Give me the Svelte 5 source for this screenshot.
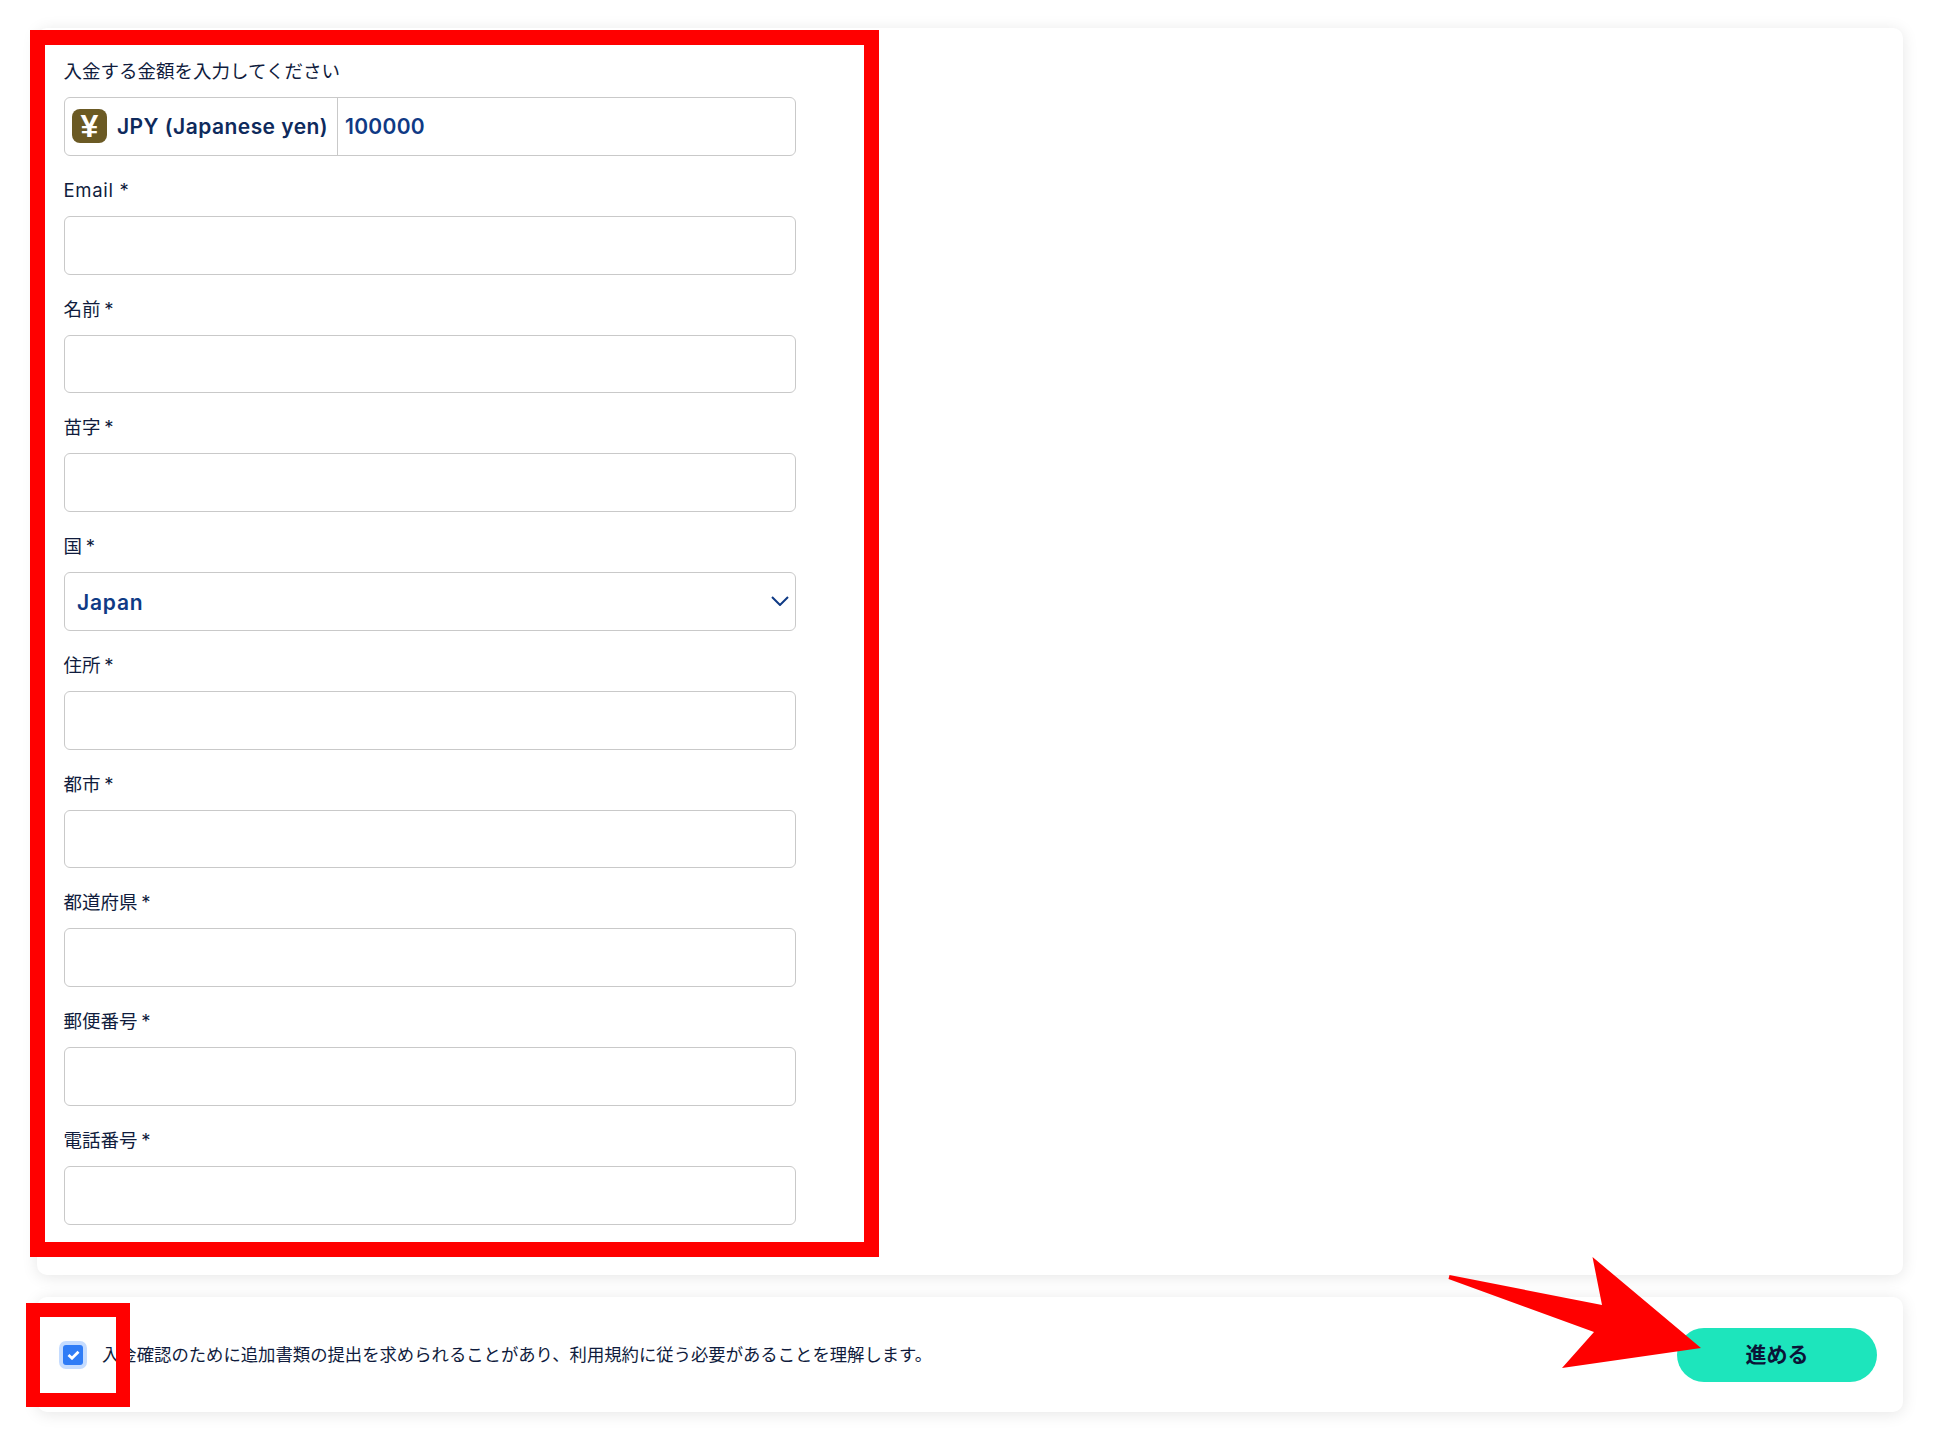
<script lang="ts">
	const fields = ['Email', '名前', '苗字', '国', '住所', '都市', '都道府県', '郵便番号', '電話番号'];
</script>

<div class="page">
	<section class="card form-card">
		<div class="field">
			<div class="label">入金する金額を入力してください</div>
			<div class="control amount">
				<div class="currency">
					<span class="coin">¥</span>
					<span class="code">JPY (Japanese yen)</span>
				</div>
				<span class="value">100000</span>
			</div>
		</div>

		{#each fields as name}
			<div class="field">
				<div class="label" class:latin={name === 'Email'}>{name} *</div>
				{#if name === '国'}
					<div class="control select">
						<span class="value">Japan</span>
						<svg class="chevron" width="18" height="10" viewBox="0 0 18 10" fill="none">
							<path d="M1 1l8 8 8-8" stroke="#0f3a85" stroke-width="2" />
						</svg>
					</div>
				{:else}
					<div class="control"></div>
				{/if}
			</div>
		{/each}
	</section>

	<section class="card confirm-card">
		<div class="confirm">
			<span class="checkbox">
				<svg width="13" height="10" viewBox="0 0 13 10" fill="none">
					<path d="M1.5 5l3.5 3.2 6.5-6.5" stroke="#fff" stroke-width="2.8" />
				</svg>
			</span>
			<span class="confirm-text">入金確認のために追加書類の提出を求められることがあり、利用規約に従う必要があることを理解します。</span>
		</div>
		<button class="next" type="button">進める</button>
	</section>

	<!-- screenshot annotations -->
	<div class="mark mark-form"></div>
	<div class="mark mark-check"></div>
	<svg class="arrow" width="1946" height="1438" viewBox="0 0 1946 1438">
		<polygon
			fill="#ff0000"
			points="1449.5,1275 1602,1305 1592.5,1257 1701,1348 1562,1368 1594,1332 1448.5,1279"
		/>
	</svg>
</div>

<style>
	:global(body) {
		margin: 0;
		background: #fff;
	}

	.page {
		position: relative;
		width: 1946px;
		height: 1438px;
		box-sizing: border-box;
		padding: 28px 43px 0 37px;
		overflow: hidden;
		font-family: Inter, 'Noto Sans CJK JP', sans-serif;
		color: #101c3d;
	}

	.card {
		background: #fff;
		border-radius: 10px;
		box-shadow: 0 2px 16px rgba(0, 0, 0, 0.1);
		box-sizing: border-box;
	}

	.form-card {
		height: 1247px;
		padding: 30px 0 0 26.5px;
	}

	.field {
		width: 732.5px;
		height: 118.75px;
	}

	.label {
		height: 26px;
		margin-bottom: 13px;
		font-size: 18.5px;
		line-height: 26px;
		word-spacing: -1.5px;
	}

	.label.latin {
		letter-spacing: 0.7px;
		word-spacing: 0;
	}

	.control {
		box-sizing: border-box;
		height: 58.75px;
		border: 1px solid #c9c9c9;
		border-radius: 6px;
		display: flex;
		align-items: center;
	}

	.amount {
		overflow: hidden;
	}

	.currency {
		display: flex;
		align-items: center;
		gap: 10px;
		box-sizing: border-box;
		height: 100%;
		width: 273.5px;
		padding-left: 7.5px;
		border-right: 1px solid #c9c9c9;
		flex: none;
	}

	.coin {
		display: flex;
		align-items: center;
		justify-content: center;
		width: 35px;
		height: 34px;
		border-radius: 8px;
		background: #6b5a24;
		color: #fff;
		font-family: 'Liberation Sans', sans-serif;
		font-size: 32px;
		font-weight: 700;
	}

	.code {
		font-size: 21px;
		font-weight: 600;
		letter-spacing: 0.45px;
		color: #0e2a5c;
		white-space: nowrap;
	}

	.value {
		padding-left: 7px;
		font-size: 21px;
		font-weight: 600;
		letter-spacing: 0.3px;
		color: #0f3a85;
	}

	.select {
		justify-content: space-between;
		padding-left: 5.5px;
		padding-right: 6px;
	}

	.select .value {
		padding-top: 2px;
		letter-spacing: 0.8px;
	}

	.confirm-card {
		display: flex;
		align-items: center;
		justify-content: space-between;
		height: 115px;
		margin-top: 22px;
		padding: 0 26px 0 26px;
	}

	.confirm {
		display: flex;
		align-items: center;
		gap: 19px;
	}

	.checkbox {
		display: flex;
		align-items: center;
		justify-content: center;
		box-sizing: border-box;
		width: 20px;
		height: 20px;
		border-radius: 3px;
		background: #2f7cf6;
		box-shadow: 0 0 0 4px #c5dcff;
	}

	.confirm-text {
		font-size: 17.35px;
		line-height: 26px;
	}

	.next {
		width: 200px;
		height: 54px;
		padding-bottom: 4px;
		border: none;
		border-radius: 27px;
		background: #1de5bc;
		color: #0b1437;
		font-family: inherit;
		font-size: 21px;
		font-weight: 700;
	}

	.mark {
		position: absolute;
		box-sizing: border-box;
		border: 15px solid #ff0000;
	}

	.mark-form {
		left: 30px;
		top: 30px;
		width: 849px;
		height: 1227px;
	}

	.mark-check {
		left: 26px;
		top: 1303px;
		width: 104px;
		height: 104px;
		border-width: 14px;
	}

	.arrow {
		position: absolute;
		left: 0;
		top: 0;
		pointer-events: none;
	}
</style>
